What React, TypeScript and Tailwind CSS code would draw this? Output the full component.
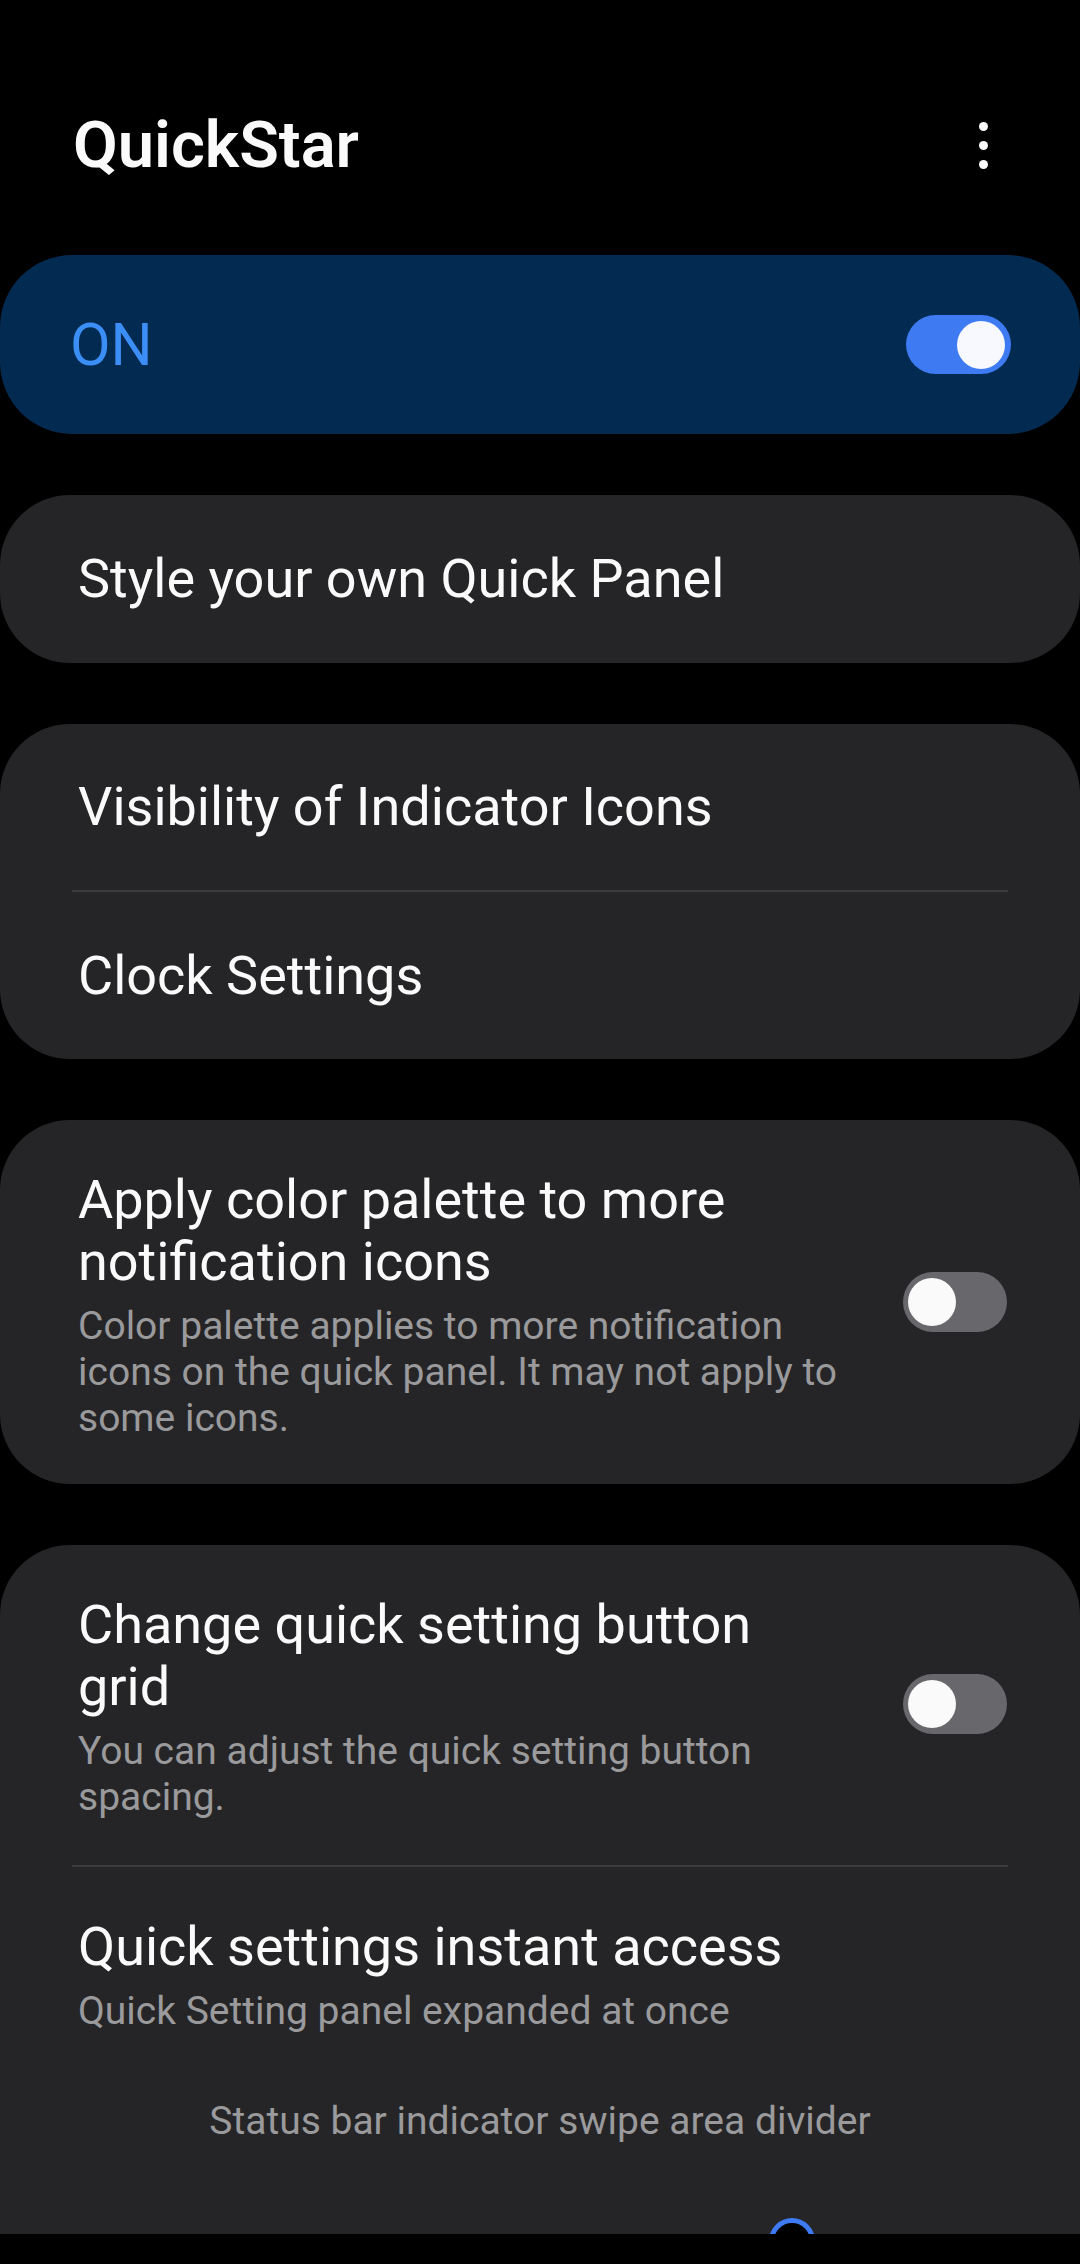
import React from "react";

const Toggle = ({ on }: { on: boolean }) =>
  on ? (
    <div className="flex h-[59px] w-[105px] shrink-0 items-center justify-end rounded-full bg-[#3e7bf3] pr-[6px]">
      <div className="h-[48px] w-[48px] rounded-full bg-[#f8f9fe]" />
    </div>
  ) : (
    <div className="flex h-[60px] w-[104px] shrink-0 items-center rounded-full bg-[#68686c] pl-[5px]">
      <div className="h-[48px] w-[48px] rounded-full bg-[#fafafa]" />
    </div>
  );

const Divider = () => <div className="mx-[72px] h-[2px] bg-[#3c3c3e]" />;

const SwitchRow = ({
  title,
  desc,
  pb,
}: {
  title: string;
  desc: string;
  pb: string;
}) => (
  <div className={`flex items-center pl-[78px] pr-[73px] pt-[49px] ${pb}`}>
    <div className="w-[766px]">
      <div className="text-[54px] leading-[62px] text-[#fafafa]">{title}</div>
      <div className="mt-[10px] text-[39px] leading-[46px] text-[#9a9a9c]">{desc}</div>
    </div>
    <div className="mb-[6px] ml-auto">
      <Toggle on={false} />
    </div>
  </div>
);

export default function App() {
  return (
    <div
      className="flex h-[2264px] w-full flex-col overflow-hidden bg-black"
      style={{ fontFamily: "Roboto, 'Noto Sans', sans-serif" }}
    >
      {/* header */}
      <div className="flex items-center justify-between pl-[73px] pr-[92px] pt-[113px]">
        <h1 className="text-[65px] font-semibold leading-[65px] text-[#fafafa]">QuickStar</h1>
        <div className="flex flex-col gap-[10px]">
          <span className="h-[9px] w-[9px] rounded-full bg-[#fafafa]" />
          <span className="h-[9px] w-[9px] rounded-full bg-[#fafafa]" />
          <span className="h-[9px] w-[9px] rounded-full bg-[#fafafa]" />
        </div>
      </div>

      <div className="mt-[77px] flex flex-col gap-[61px]">
        {/* master switch */}
        <div className="flex h-[179px] items-center justify-between rounded-[72px] bg-[#032a50] pl-[70px] pr-[69px]">
          <span className="text-[59px] leading-none text-[#3b8ef5]">ON</span>
          <Toggle on />
        </div>

        <div className="flex h-[168px] items-center rounded-[70px] bg-[#252527] pl-[78px]">
          <span className="text-[54px] leading-[62px] text-[#fafafa]">Style your own Quick Panel</span>
        </div>

        <div className="flex flex-col rounded-[70px] bg-[#252527]">
          <div className="flex h-[166px] items-center pl-[78px] text-[54px] leading-[62px] text-[#fafafa]">
            Visibility of Indicator Icons
          </div>
          <Divider />
          <div className="flex h-[167px] items-center pl-[78px] text-[54px] leading-[62px] text-[#fafafa]">
            Clock Settings
          </div>
        </div>

        <div className="rounded-[70px] bg-[#252527]">
          <SwitchRow
            title="Apply color palette to more notification icons"
            desc="Color palette applies to more notification icons on the quick panel. It may not apply to some icons."
            pb="pb-[43px]"
          />
        </div>

        <div className="h-[689px] overflow-hidden rounded-t-[70px] bg-[#252527]">
          <SwitchRow
            title="Change quick setting button grid"
            desc="You can adjust the quick setting button spacing."
            pb="pb-[45px]"
          />
          <Divider />
          <div className="pl-[78px] pr-[73px] pt-[49px]">
            <div className="text-[54px] leading-[62px] text-[#fafafa]">Quick settings instant access</div>
            <div className="mt-[10px] text-[39px] leading-[46px] text-[#9a9a9c]">
              Quick Setting panel expanded at once
            </div>
          </div>
          <div className="mt-[64px] text-center text-[39px] leading-[46px] text-[#9a9a9c]">
            Status bar indicator swipe area divider
          </div>
          <div className="ml-[769px] mt-[74px] h-[46px] w-[46px] rounded-full border-[5px] border-[#3e7bf3] bg-black" />
        </div>
      </div>
    </div>
  );
}
